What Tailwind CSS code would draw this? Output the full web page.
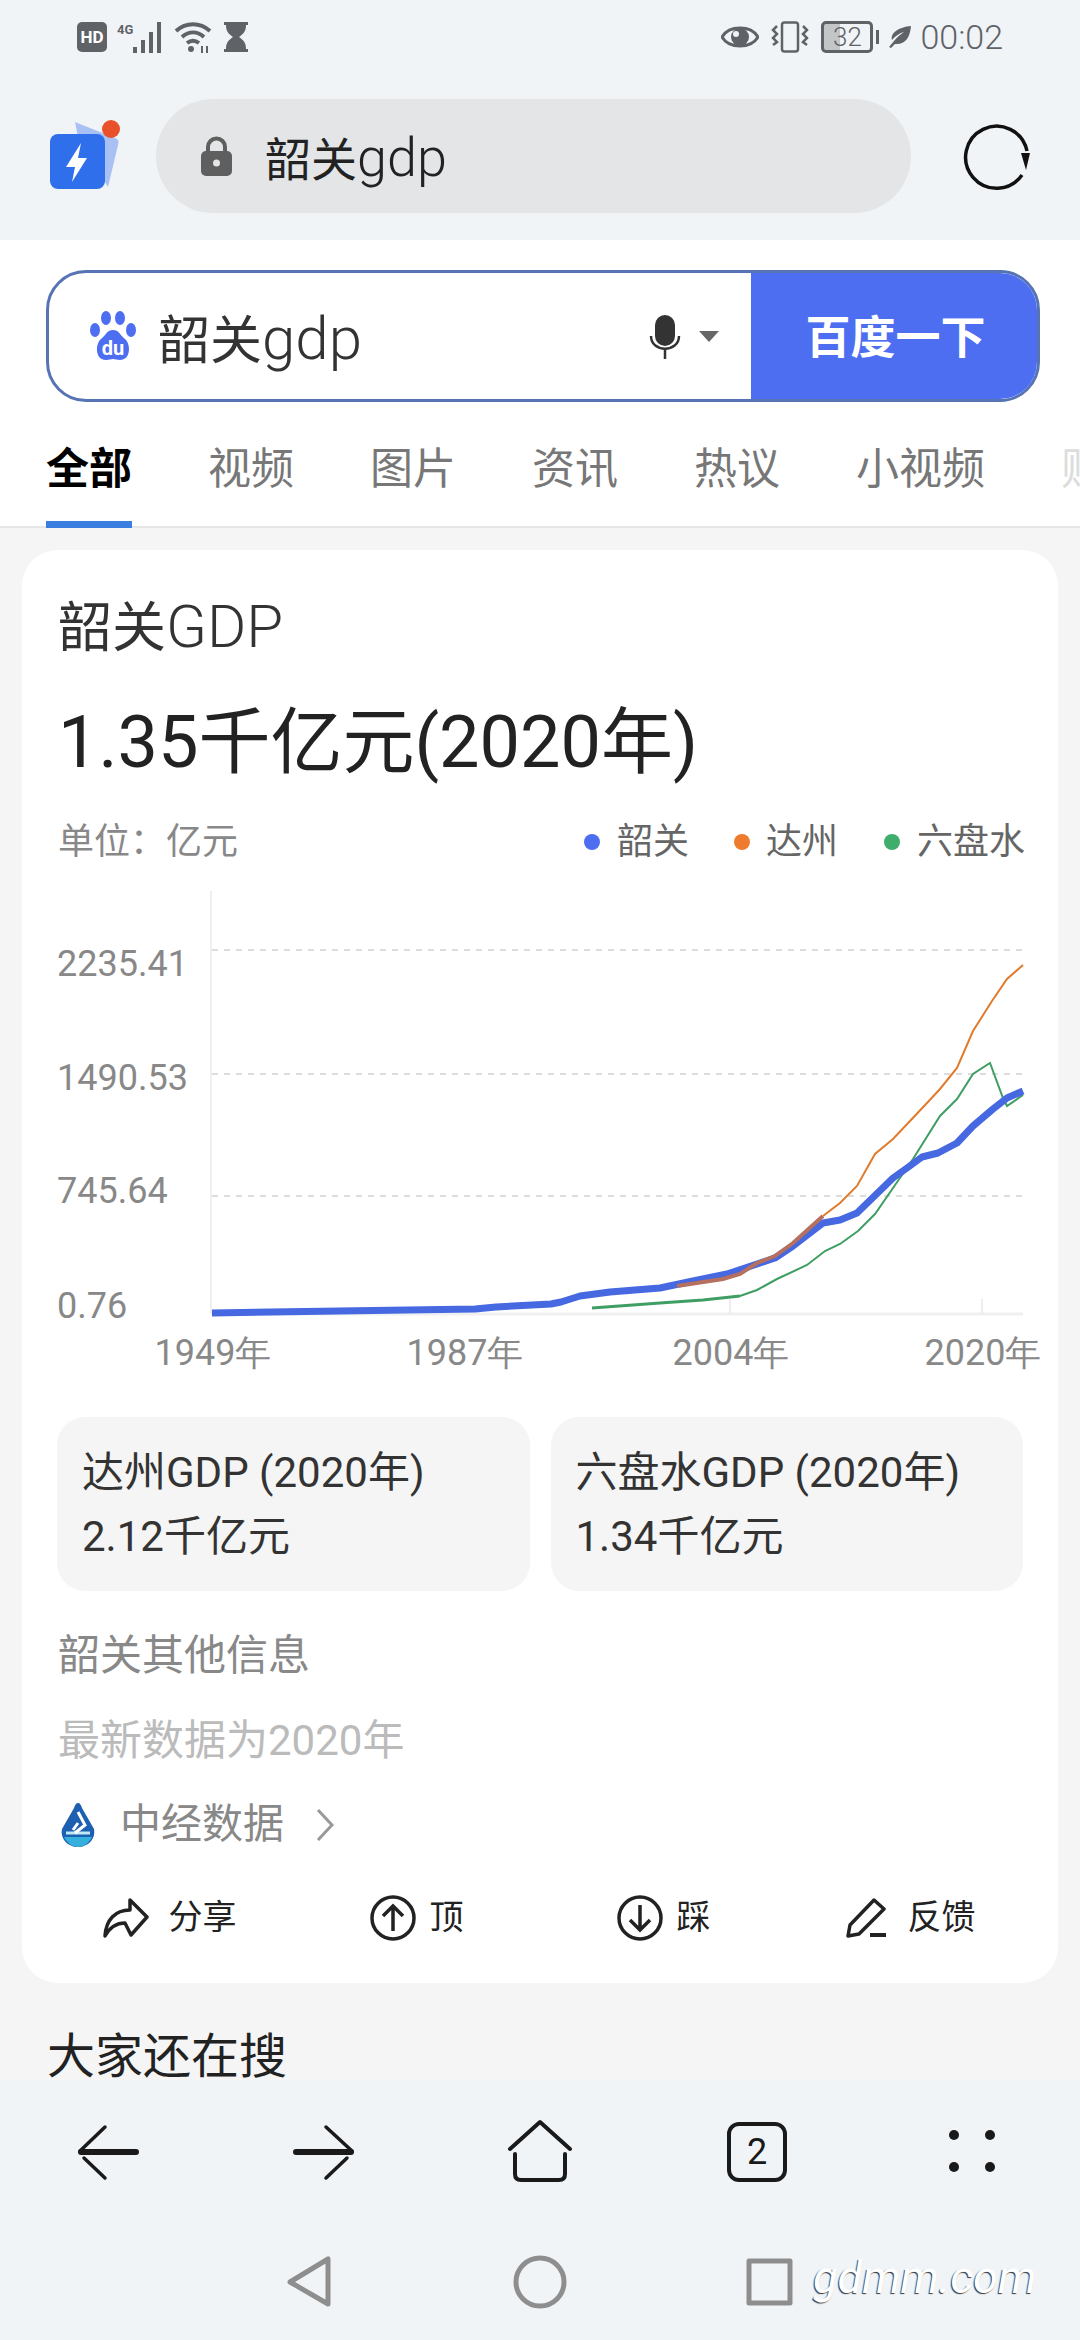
<!DOCTYPE html>
<html lang="zh">
<head>
    <meta charset="UTF-8">
    <meta name="viewport" content="width=device-width, initial-scale=1.0">
    <title>韶关gdp</title>
    <script src="https://cdn.jsdelivr.net/npm/@tailwindcss/browser@4"></script>
</head>
<body class="bg-[#f5f5f6] font-['Roboto','Noto_Sans_CJK_SC',sans-serif]">
<div class="w-[1080px] h-[2340px] flex flex-col overflow-hidden">

    <!-- status bar + address bar -->
    <header class="h-[240px] shrink-0 bg-[#f1f4f7]">
        <div class="h-[74px] flex items-center justify-between pl-[77px] pr-[77px] text-[#5f6368]">
            <div class="flex items-center">
                <svg width="30" height="30" viewBox="0 0 30 30"><rect width="30" height="30" rx="5" fill="#5f6368"/><text x="15" y="21" text-anchor="middle" font-size="17" font-weight="700" fill="#fff" font-family="Roboto">HD</text></svg>
                <span class="ml-[10px] -mt-[14px] text-[13px] leading-[14px] font-bold">4G</span>
                <svg class="-ml-[1px]" width="32" height="32" viewBox="0 0 32 32" fill="#5f6368"><rect x="1" y="26" width="4" height="6"/><rect x="9" y="19" width="4" height="13"/><rect x="17" y="11" width="4" height="21"/><rect x="25" y="1" width="4" height="31"/></svg>
                <svg class="ml-[10px]" width="38" height="32" viewBox="0 0 38 32" fill="none" stroke="#5f6368" stroke-width="4"><path d="M2 10c10-9 24-9 34 0"/><path d="M8 16c7-6 15-6 22 0"/><path d="M13 22c4-3 8-3 12 0"/><circle cx="17" cy="28" r="3" fill="#5f6368" stroke="none"/><path d="M28 25v7M33 25v7" stroke-width="2"/></svg>
                <svg class="ml-[11px]" width="26" height="32" viewBox="0 0 26 32" fill="#5f6368"><path d="M1 1h24v3h-2c0 7-3 9-7 12 4 3 7 5 7 12h2v3H1v-3h2c0-7 3-9 7-12-4-3-7-5-7-12H1z"/></svg>
            </div>
            <div class="flex items-center">
                <svg width="38" height="28" viewBox="0 0 38 28"><path d="M1 14C8 2 30 2 37 14 30 26 8 26 1 14z" fill="none" stroke="#5f6368" stroke-width="3"/><circle cx="19" cy="14" r="9" fill="#5f6368"/><circle cx="15" cy="11" r="3" fill="#f1f4f7"/></svg>
                <svg class="ml-[12px]" width="38" height="32" viewBox="0 0 38 32" fill="none" stroke="#5f6368" stroke-width="2.5"><rect x="11" y="1.5" width="16" height="29" rx="2.5"/><path d="M6 5l-4 4 4 4-4 4 4 4-4 3M32 5l4 4-4 4 4 4-4 4 4 3"/></svg>
                <div class="ml-[12px] w-[52px] h-[32px] border-[3px] border-[#5f6368] rounded-[5px] flex items-center justify-center text-[26px] leading-none font-light bg-[linear-gradient(90deg,#c3c5c7_34%,transparent_34%)]">32</div>
                <div class="ml-[3px] w-[3px] h-[14px] bg-[#5f6368]"></div>
                <svg class="ml-[10px]" width="22" height="22" viewBox="0 0 22 22" fill="#5f6368"><path d="M22 0C21 12 16 19 6 18L2 22 0 21l5-6C8 11 12 8 15 6 11 7 6 10 3 14 1 7 10 1 22 0z"/></svg>
                <span class="ml-[9px] text-[34px] leading-none font-light">00:02</span>
            </div>
        </div>
        <div class="flex items-start pl-[50px] pt-[25px]">
            <svg class="mt-[21px]" width="72" height="72" viewBox="50 120 72 72"><path d="M75 122l40 16c4 2 4 3 3 7l-10 42-30-50z" fill="#a9c0f5"/><rect x="50" y="134" width="55" height="55" rx="8" fill="#2f6fec"/><path d="M81 143l-15 24h9l-3 15 15-24h-9z" fill="#fff"/><circle cx="111" cy="129" r="9" fill="#e8512a"/></svg>
            <div class="ml-[34px] w-[755px] h-[114px] rounded-full bg-[#e3e5e7] flex items-center pl-[45px] text-[46px] text-[#222]">
                <svg width="31" height="40" viewBox="0 0 31 40"><path d="M7 18v-7a8.500 8.500 0 0 1 17 0v7" fill="none" stroke="#5f5f5f" stroke-width="4"/><rect y="15" width="31" height="25" rx="5" fill="#5f5f5f"/><circle cx="15.500" cy="27" r="3.500" fill="#e3e5e7"/></svg>
                <span class="ml-[33px] mt-[2px]">韶关<span class="text-[54px] font-light">gdp</span></span>
            </div>
            <svg class="ml-[50px] mt-[23px]" width="70" height="68" viewBox="961 121 70 68" fill="none" stroke="#111" stroke-width="3.500"><path d="M1027 150a31 31 0 1 0-5 24"/><path d="M1021 152h9l-4 17z" fill="#111" stroke="none"/></svg>
        </div>
    </header>

    <!-- search box + tabs -->
    <section class="h-[288px] shrink-0 bg-white border-b-[2px] border-[#e6e6e6] relative">
        <div class="ml-[46px] mt-[30px] w-[994px] h-[132px] rounded-[40px] border-[3px] border-[#5673b4] overflow-hidden flex items-center">
            <svg class="ml-[41px]" width="46" height="50" viewBox="0 0 46 50" fill="#4e6ef2"><ellipse cx="5" cy="19" rx="5" ry="7"/><ellipse cx="16" cy="7" rx="5" ry="7"/><ellipse cx="30" cy="7" rx="5" ry="7"/><ellipse cx="41" cy="19" rx="5" ry="7"/><path d="M23 19c6 0 7 5 12 9 6 5 6 21-5 21-3 0-5-1-7-1s-4 1-7 1C5 49 5 33 11 28c5-4 6-9 12-9z"/><text x="23" y="44" text-anchor="middle" font-size="20" font-weight="700" fill="#fff" font-family="Roboto">du</text></svg>
            <span class="ml-[22px] mt-[6px] text-[52px] leading-none text-[#333]">韶关<span class="text-[60px] font-light">gdp</span></span>
            <svg class="ml-auto mt-[2px]" width="32" height="44" viewBox="0 0 32 44"><rect x="6" y="0" width="20" height="31" rx="10" fill="#333"/><path d="M2 21c0 17 28 17 28 0" fill="none" stroke="#333" stroke-width="2.500"/><path d="M16 34v10" stroke="#333" stroke-width="2.500"/></svg>
            <div class="ml-[18px] mr-[32px] border-x-[10px] border-x-transparent border-t-[11px] border-t-[#666]"></div>
            <div class="w-[286px] shrink-0 h-full bg-[#4e6ef2] flex items-center justify-center text-[45px] font-bold text-white"><span class="mt-[6px] ml-[3px]">百度一下</span></div>
        </div>
        <nav class="mt-[37px] pl-[46px] flex gap-[76px] text-[43px] leading-[60px] text-[#777] whitespace-nowrap">
            <a class="font-bold text-black">全部</a>
            <a>视频</a>
            <a>图片</a>
            <a>资讯</a>
            <a>热议</a>
            <a>小视频</a>
            <a class="text-[#ddd]">财经</a>
        </nav>
        <div class="absolute left-[46px] bottom-[-2px] w-[86px] h-[7px] bg-[#3a7fe0]"></div>
    </section>

    <main class="flex-1 overflow-hidden">
        <article class="mx-[22px] mt-[22px] h-[1433px] rounded-[36px] bg-white pt-[47px]">
            <h2 class="px-[36px] h-[60px] text-[54px] leading-[60px] text-[#333]">韶关<span class="text-[60px] font-light">GDP</span></h2>
            <p class="px-[36px] mt-[41px] h-[90px] text-[72px] leading-[90px] text-[#222]">1.35千亿元(2020年)</p>
            <div class="pl-[36px] pr-[33px] mt-[29px] h-[50px] flex items-center justify-between text-[36px] text-[#888]">
                <span>单位：亿元</span>
                <div class="flex items-center text-[#666]">
                    <i class="w-[16px] h-[16px] rounded-full bg-[#4e6ef2]"></i><span class="ml-[17px]">韶关</span>
                    <i class="ml-[45px] w-[16px] h-[16px] rounded-full bg-[#ee7b2e]"></i><span class="ml-[16px]">达州</span>
                    <i class="ml-[46px] w-[16px] h-[16px] rounded-full bg-[#3fae6c]"></i><span class="ml-[17px]">六盘水</span>
                </div>
            </div>

            <!-- chart, coordinates are page pixels -->
            <svg class="mt-[14px] block" width="1036" height="500" viewBox="22 880 1036 500" font-family="Roboto" font-size="36" fill="#888">
                <path d="M211 890V1313" stroke="#efefef" stroke-width="2"/>
                <path d="M212 1313H1023" stroke="#f0f0f0" stroke-width="3"/>
                <path d="M212 949H1023M212 1073H1023M212 1195H1023" stroke="#dcdcdc" stroke-width="2" stroke-dasharray="6 6"/>
                <path d="M730 1298V1313M982 1298V1313" stroke="#eeeeee" stroke-width="2"/>
                <path d="M592 1307L660 1302L703 1299L740 1295" fill="none" stroke="#3f9e63" stroke-width="3"/>
                <path d="M740 1295L757 1289L777 1278L807 1264L825 1250L840 1243L858 1230L875 1213L893 1187L913 1158L940 1115L957 1098L973 1073L990 1062L1003 1097L1007 1105L1023 1094" fill="none" stroke="#3f9e63" stroke-width="2"/>
                <path d="M212 1312L475 1308L496 1306L551 1303L561 1301L580 1295L610 1291L660 1287L693 1280L727 1273L757 1263L775 1257L793 1245L823 1222L840 1219L857 1212L893 1177L907 1167L922 1156L938 1152L957 1142L973 1125L993 1108L1007 1097L1023 1090" fill="none" stroke="#4668e0" stroke-width="7" stroke-linejoin="round"/>
                <path d="M677 1285L723 1278L740 1273L757 1262L775 1255L793 1242L823 1215" fill="none" stroke="#b5705f" stroke-width="4"/>
                <path d="M823 1215L840 1202L857 1185L875 1153L893 1138L910 1120L927 1102L940 1088L957 1067L973 1030L992 1000L1007 978L1023 964" fill="none" stroke="#e07b2e" stroke-width="2"/>
                <text x="57" y="975">2235.41</text>
                <text x="57" y="1089">1490.53</text>
                <text x="57" y="1202">745.64</text>
                <text x="57" y="1317">0.76</text>
                <g text-anchor="middle">
                    <text x="213" y="1364">1949年</text>
                    <text x="465" y="1364">1987年</text>
                    <text x="731" y="1364">2004年</text>
                    <text x="983" y="1364">2020年</text>
                </g>
            </svg>

            <div class="px-[35px] mt-[36px] grid grid-cols-2 gap-[21px] text-[42px] leading-[64px] text-[#333]">
                <div class="h-[174px] rounded-[28px] bg-[#f5f5f5] pl-[25px] pt-[24px]"><p>达州GDP (2020年)</p><p>2.12千亿元</p></div>
                <div class="h-[174px] rounded-[28px] bg-[#f5f5f5] pl-[25px] pt-[24px]"><p>六盘水GDP (2020年)</p><p>1.34千亿元</p></div>
            </div>
            <p class="px-[36px] mt-[40px] h-[50px] text-[42px] leading-[50px] text-[#888]">韶关其他信息</p>
            <p class="px-[36px] mt-[35px] h-[50px] text-[42px] leading-[50px] text-[#bbb]">最新数据为2020年</p>
            <div class="pl-[38px] mt-[34px] h-[50px] flex items-center text-[41px] text-[#888]">
                <svg width="36" height="44" viewBox="0 0 36 44"><path d="M18 0C20 0 21 2 22 5L34 26C36 36 28 44 18 44S0 36 2 26L14 5C15 2 16 0 18 0z" fill="#1d5fb0"/><path d="M4 34h28c-3 6-8 10-14 10S7 40 4 34z" fill="#35b0dc"/><path d="M6 30h24" stroke="#bfe8f5" stroke-width="3"/><path d="M18 9l7 13-10 8M18 20l-5 7" fill="none" stroke="#fff" stroke-width="3"/></svg>
                <span class="ml-[24px]">中经数据</span>
                <svg class="ml-[32px]" width="18" height="32" viewBox="0 0 18 32" fill="none" stroke="#999" stroke-width="3"><path d="M2 1l14 15L2 31"/></svg>
            </div>
            <div class="px-[24px] mt-[42px] h-[50px] grid grid-cols-4 text-[34px] text-[#222]">
                <div class="flex items-center justify-center">
                    <svg width="46" height="40" viewBox="0 0 46 40" fill="none" stroke="#222" stroke-width="3.500" stroke-linejoin="round"><path d="M27 2L44 19 28 37 22 25C13 25 7 29 2 38 3 22 12 12 27 12z"/></svg>
                    <span class="ml-[20px]">分享</span>
                </div>
                <div class="flex items-center justify-center">
                    <svg width="46" height="46" viewBox="0 0 46 46" fill="none" stroke="#222" stroke-width="3.500"><circle cx="23" cy="23" r="21"/><path d="M23 36V11M13 21L23 11l10 10"/></svg>
                    <span class="ml-[14px]">顶</span>
                </div>
                <div class="flex items-center justify-center">
                    <svg width="46" height="46" viewBox="0 0 46 46" fill="none" stroke="#222" stroke-width="3.500"><circle cx="23" cy="23" r="21"/><path d="M23 10V35M13 25L23 35l10-10"/></svg>
                    <span class="ml-[14px]">踩</span>
                </div>
                <div class="flex items-center justify-center">
                    <svg width="42" height="40" viewBox="0 0 42 40" fill="none" stroke="#222" stroke-width="3.500" stroke-linejoin="round"><path d="M28 2L38 11 13 36 2 38 4 27z"/><path d="M24 37H40" stroke-width="4"/></svg>
                    <span class="ml-[20px]">反馈</span>
                </div>
            </div>
        </article>
        <h3 class="pl-[47px] mt-[44px] text-[48px] leading-[60px] text-[#222]">大家还在搜</h3>
    </main>

    <!-- browser toolbar + system nav -->
    <footer class="h-[260px] shrink-0 bg-[#f1f4f7] relative">
        <svg class="block" width="1080" height="140" viewBox="0 2080 1080 140" fill="none" stroke="#1a1a1a" stroke-linecap="round" stroke-linejoin="round">
            <path d="M81 2152H136" stroke-width="6"/><path d="M105 2127L80 2151M84 2158L105 2178" stroke-width="3.500"/>
            <path d="M296 2152H351" stroke-width="6"/><path d="M326 2127L352 2151M347 2158L326 2178" stroke-width="3.500"/>
            <path d="M510 2149L540 2122L570 2149" stroke-width="4"/>
            <path d="M515 2154V2174Q515 2180 521 2180H559Q565 2180 565 2174V2154" stroke-width="4"/>
            <rect x="729" y="2124" width="56" height="56" rx="10" stroke-width="4"/>
            <circle cx="954" cy="2135" r="5" fill="#1a1a1a" stroke="none"/><circle cx="990" cy="2135" r="5" fill="#1a1a1a" stroke="none"/>
            <circle cx="954" cy="2167" r="5" fill="#1a1a1a" stroke="none"/><circle cx="990" cy="2167" r="5" fill="#1a1a1a" stroke="none"/>
        </svg>
        <span class="absolute left-[729px] top-[44px] w-[56px] text-center text-[36px] leading-[56px] text-[#1a1a1a]">2</span>
        <svg class="block" width="1080" height="120" viewBox="0 2220 1080 120" fill="none" stroke="#8e8e8e" stroke-width="5" stroke-linejoin="round">
            <path d="M328 2259V2304L290 2282z"/>
            <circle cx="540" cy="2282" r="24"/>
            <rect x="749" y="2261" width="41" height="42"/>
        </svg>
        <span class="absolute left-[813px] top-[170px] text-[45px] leading-[56px] italic text-white [text-shadow:-1px_1px_1px_#333]">gdmm.com</span>
    </footer>
</div>
</body>
</html>
